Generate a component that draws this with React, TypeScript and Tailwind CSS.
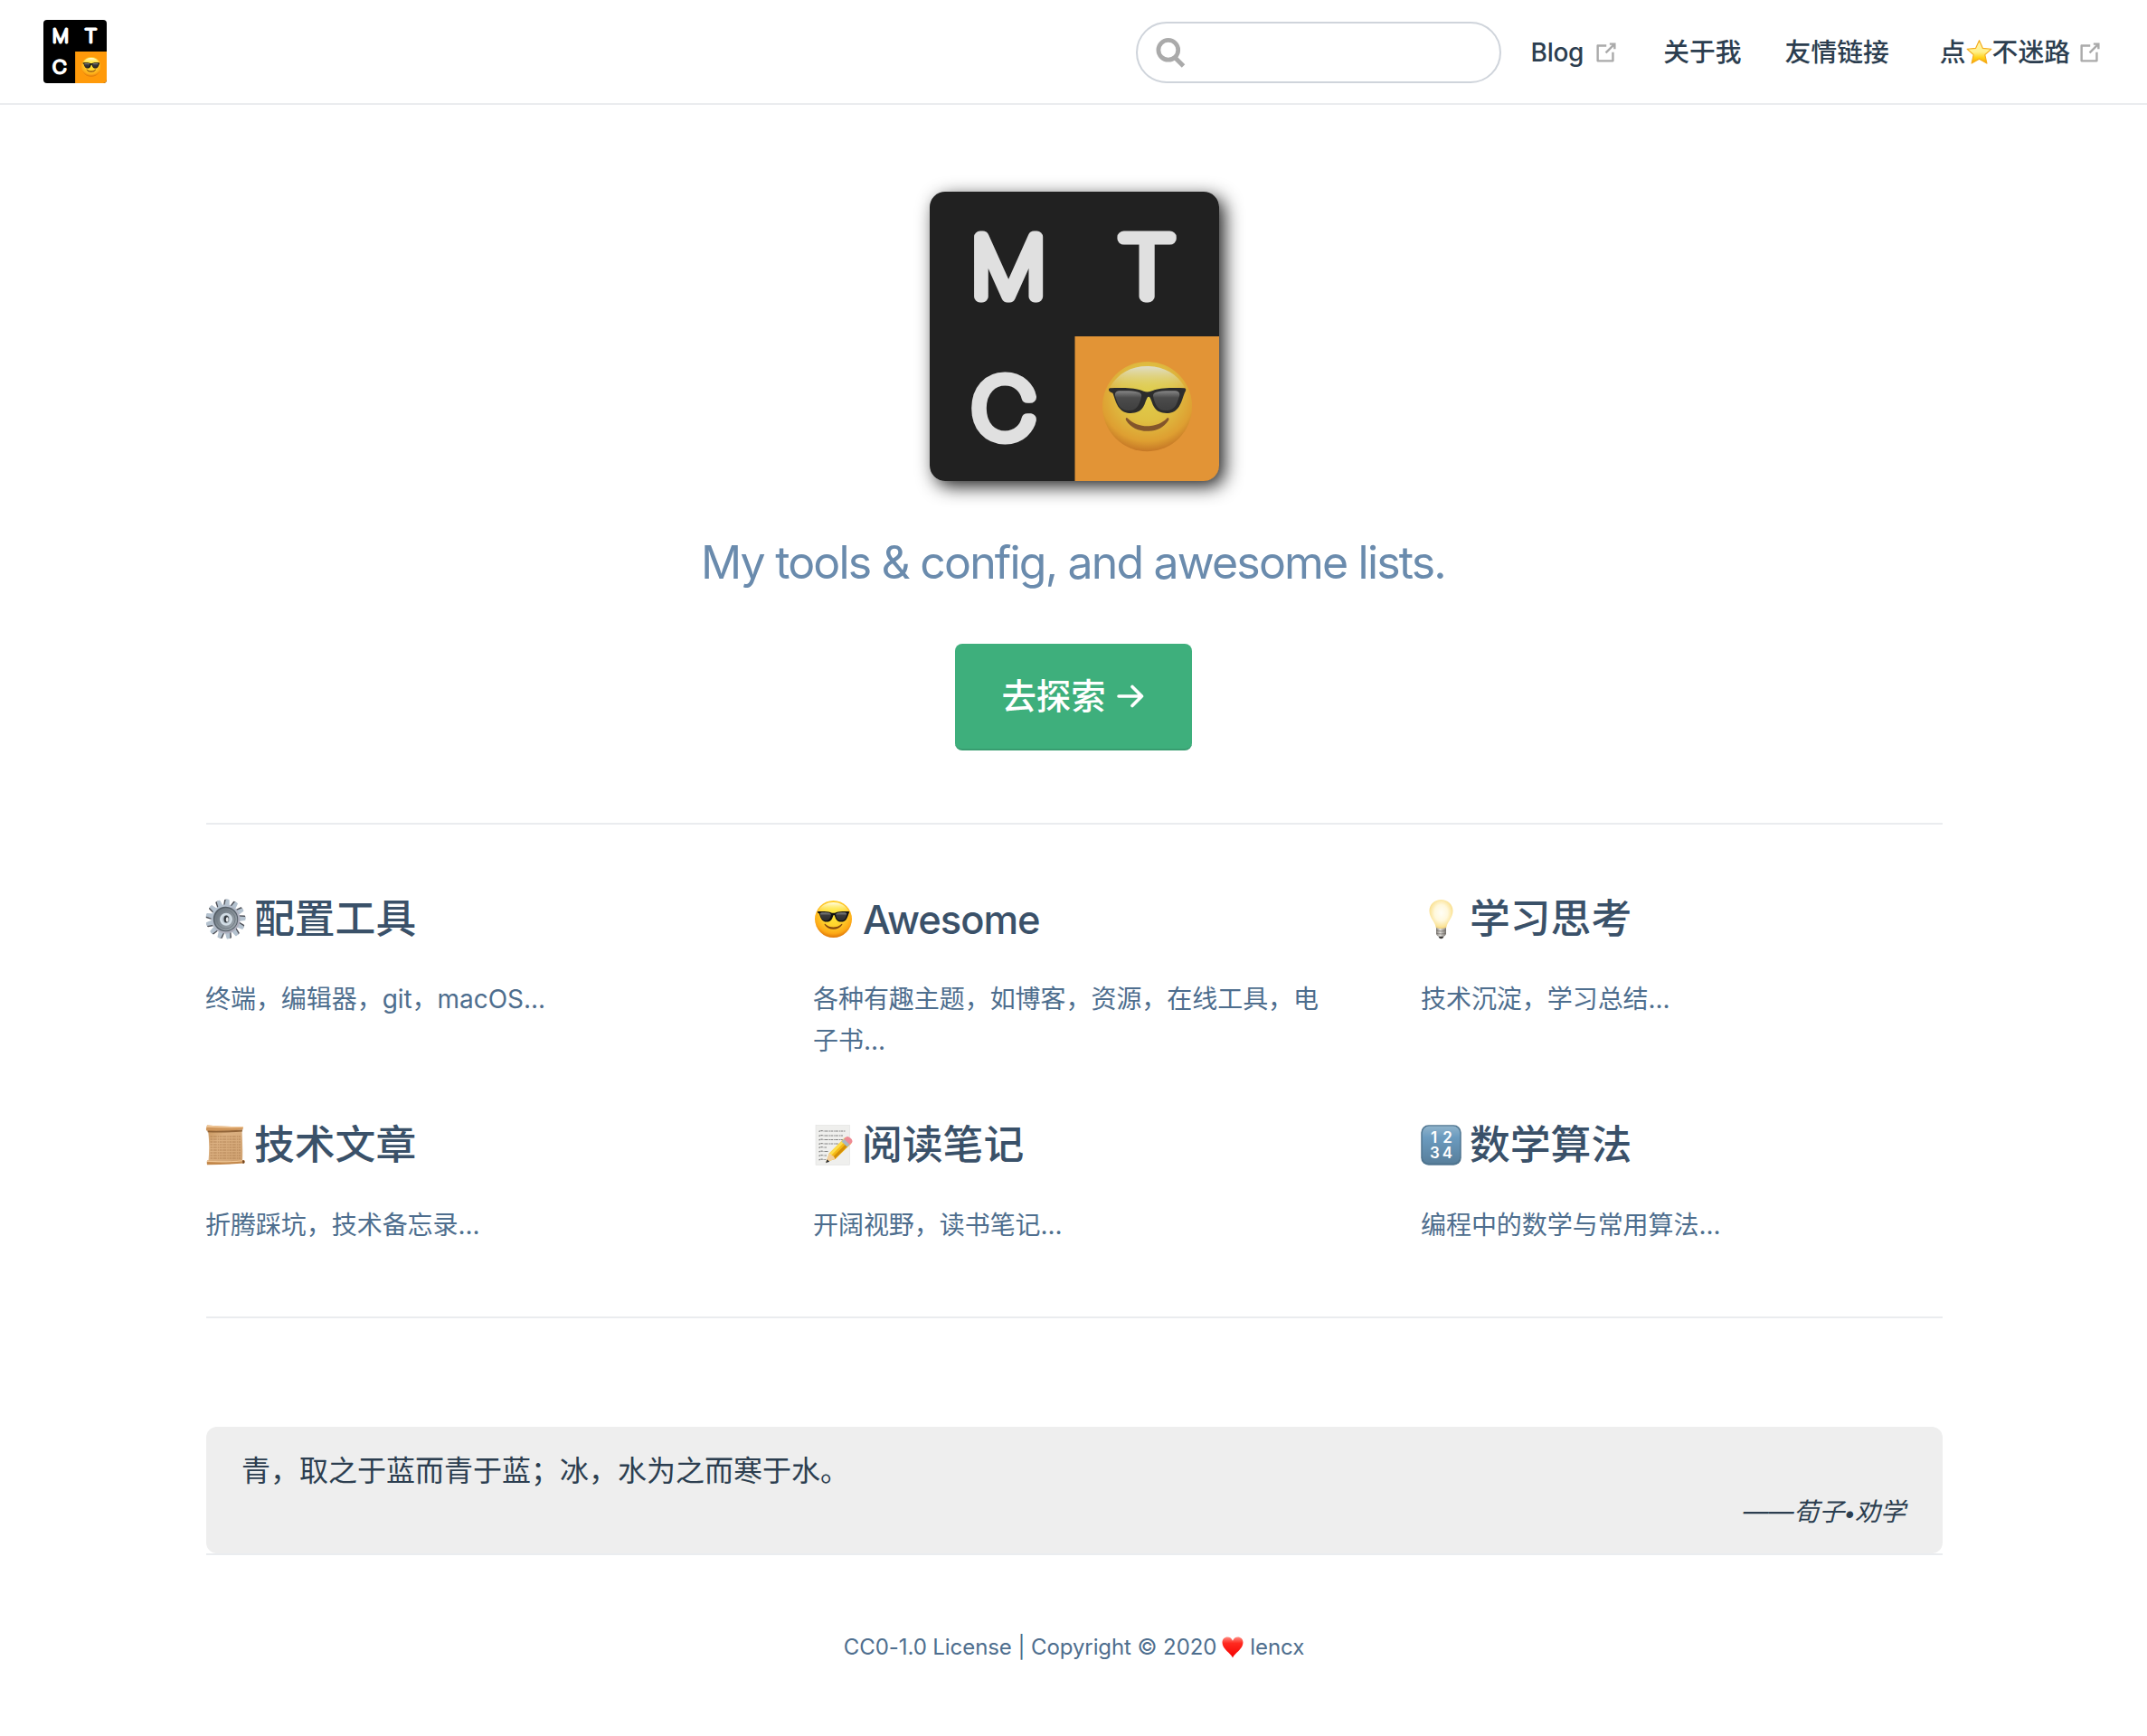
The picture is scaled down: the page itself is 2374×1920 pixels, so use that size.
import type { ReactNode } from "react";

function CoolFace({ className }: { className?: string }) {
  return (
    <svg viewBox="0 0 100 100" className={className}>
      <defs>
        <radialGradient id="face" cx="50%" cy="36%" r="66%">
          <stop offset="0" stopColor="#ffe83b" />
          <stop offset="0.45" stopColor="#ffd52e" />
          <stop offset="0.8" stopColor="#fda917" />
          <stop offset="1" stopColor="#d86c05" />
        </radialGradient>
        <linearGradient id="shine" x1="0" y1="0" x2="0" y2="1">
          <stop offset="0" stopColor="#fffff0" stopOpacity="0.95" />
          <stop offset="1" stopColor="#fff45c" stopOpacity="0.1" />
        </linearGradient>
        <linearGradient id="lens" x1="0" y1="0" x2="0" y2="1">
          <stop offset="0" stopColor="#8a8a8a" />
          <stop offset="0.35" stopColor="#3a3a3a" />
          <stop offset="1" stopColor="#2a2a2a" />
        </linearGradient>
      </defs>
      <circle cx="50" cy="50" r="50" fill="url(#face)" />
      <path d="M8 29C17 13 32 5 50 5s33 8 42 24c-14 0-28 4-42 4S22 29 8 29z" fill="url(#shine)" />
      <path
        d="M7 31c0-1 .8-1.600 2-1.600 12-.5 26-.2 33 2.200 3 1.200 5 2.200 8 2.200s5-1 8-2.200c7-2.400 21-2.700 33-2.200 1.200 0 2 .6 2 1.600 0 1.500-.8 2.500-1.500 4-2 5-3.500 12-7.500 17-3 4-7.500 5.500-12.500 5.500-6 0-11-2-14-7-2-3.500-3-8-4.500-10.500-.8-1.200-2.200-1.200-3 0C48.500 42.500 47.500 47 45.500 50.500c-3 5-8 7-14 7-5 0-9.500-1.500-12.500-5.500-4-5-5.500-12-7.500-17C7.800 33.500 7 32.500 7 31z"
        fill="#101010"
      />
      <path d="M14 36c.4-2 2-3.200 5-3.400 7-.4 16-.3 21 1.400 3 1 4 2.600 3.400 5-1.400 6-4 15-12 15.500-9 .5-13-4-15-10-.8-2.600-2.800-6.500-2.400-8.500z" fill="url(#lens)" />
      <path d="M86 36c-.4-2-2-3.200-5-3.400-7-.4-16-.3-21 1.400-3 1-4 2.600-3.400 5 1.400 6 4 15 12 15.500 9 .5 13-4 15-10 .8-2.600 2.800-6.500 2.400-8.500z" fill="url(#lens)" />
      <path d="M26 63.500c.3-1 1.400-1.200 2.200-.3C34 69 42 71.800 50 71.800s16-2.800 21.800-8.600c.8-.9 1.900-.7 2.200.3.200.8-.2 1.600-.6 2.300C68.500 73.500 60 77.500 50 77.500S31.500 73.500 26.600 65.800c-.4-.7-.8-1.500-.6-2.300z" fill="#84470f" />
    </svg>
  );
}

function Logo({
  className,
  faceClass,
  bg,
  accent,
  ink,
}: {
  className: string;
  faceClass: string;
  bg: string;
  accent: string;
  ink: string;
}) {
  return (
    <div className={"relative overflow-hidden " + className}>
      <svg viewBox="0 0 320 320" className="block size-full">
        <rect width="320" height="320" fill={bg} />
        <rect x="160.500" y="160" width="160" height="160" fill={accent} />
        <g
          fill={ink}
          stroke={ink}
          strokeWidth="13"
          strokeLinejoin="round"
          strokeLinecap="round"
          fontFamily="Inter, sans-serif"
          fontWeight="100"
          fontSize="90"
          textAnchor="middle"
        >
          <text transform="translate(87 115.500) scale(1.04 1)">M</text>
          <text transform="translate(240 115.500) scale(1.14 1)">T</text>
          <text transform="translate(82 271.500) scale(1.1 1)">C</text>
        </g>
      </svg>
      <div className="absolute left-[59.700%] top-[58.900%] size-[31%]">
        <CoolFace className={"block size-full " + faceClass} />
      </div>
    </div>
  );
}

function OutboundIcon({ className }: { className?: string }) {
  return (
    <svg viewBox="0 0 100 100" className={"size-[30px] shrink-0 text-[#aaa] " + className} fill="currentColor">
      <path d="M18.800 85.100h56c2.200 0 4-1.800 4-4v-32h-8v28h-48v-48h28v-8h-32c-2.200 0-4 1.800-4 4v56c0 2.200 1.800 4 4 4z" />
      <polygon points="45.7,48.7 51.3,54.3 77.2,28.5 77.2,37.2 85.2,37.2 85.2,14.9 62.8,14.9 62.8,22.9 71.5,22.9" />
    </svg>
  );
}

function Star() {
  return (
    <svg viewBox="0 0 30 29" className="-mt-[2px] h-[29px] w-[29px] shrink-0">
      <defs>
        <linearGradient id="star" x1="0" y1="0" x2="0" y2="1">
          <stop offset="0" stopColor="#fff6b0" />
          <stop offset="0.5" stopColor="#fff08a" />
          <stop offset="0.75" stopColor="#ffd21a" />
          <stop offset="1" stopColor="#f7a400" />
        </linearGradient>
      </defs>
      <path d="M15 1.200l4 9 9.800.9-7.300 6.600 2.200 9.800L15 22.500l-8.700 5 2.200-9.800L1.200 11.100l9.800-.9z" fill="url(#star)" stroke="#f5ac1c" strokeWidth="1.200" strokeLinejoin="round" />
    </svg>
  );
}

function Gear() {
  const teeth = Array.from({ length: 13 }, (_, i) => (i * 360) / 13);
  return (
    <svg viewBox="0 0 90 90" className="size-[45px]">
      <defs>
        <linearGradient id="gear" x1="0" y1="0" x2="1" y2="1">
          <stop offset="0" stopColor="#b9c9d6" />
          <stop offset="1" stopColor="#a9a6b4" />
        </linearGradient>
        <linearGradient id="dish" x1="0" y1="0" x2="1" y2="1">
          <stop offset="0" stopColor="#66717b" />
          <stop offset="1" stopColor="#a2abb2" />
        </linearGradient>
      </defs>
      {teeth.map((a) => (
        <g key={a} transform={`rotate(${a + 5} 45 45)`}>
          <path d="M39.500 16L40.500 2.500q.5-1.500 2-1.500h4q1.500 0 2 1.500L49.500 16z" fill="#4c4e55" transform="translate(-2 .5)" />
          <path d="M40 16L41.500 2.500q.5-1.500 2-1.500h4q1.500 0 2 1.500L51 16z" fill="#b4c2cf" />
        </g>
      ))}
      <circle cx="45" cy="45" r="32" fill="url(#gear)" />
      <circle cx="45" cy="45" r="27.500" fill="#555f68" />
      <circle cx="45.500" cy="45.500" r="25" fill="url(#dish)" />
      <circle cx="45.500" cy="45.500" r="20.500" fill="none" stroke="#737d85" strokeWidth="2" />
      <circle cx="46" cy="45.500" r="14" fill="#d2dde5" />
      <circle cx="46" cy="45.500" r="9" fill="#b3bfc8" />
      <ellipse cx="46.500" cy="45" rx="5.500" ry="8" fill="#363c42" />
      <ellipse cx="48.500" cy="46" rx="3" ry="5.500" fill="#e4e8eb" />
    </svg>
  );
}

function Bulb() {
  return (
    <svg viewBox="0 0 90 90" className="size-[45px]">
      <defs>
        <radialGradient id="bulb" cx="50%" cy="46%" r="56%">
          <stop offset="0" stopColor="#fffef6" />
          <stop offset="0.5" stopColor="#fff8dc" />
          <stop offset="0.85" stopColor="#fbe49a" />
          <stop offset="1" stopColor="#edcb74" />
        </radialGradient>
        <linearGradient id="cap" x1="0" y1="0" x2="1" y2="0">
          <stop offset="0" stopColor="#7c7872" />
          <stop offset="0.4" stopColor="#e2e0dc" />
          <stop offset="1" stopColor="#77736d" />
        </linearGradient>
      </defs>
      <path d="M45 2C59 2 71 12 71 27c0 9-4 15-7.500 21C60 54 57 58 56.500 64c-4 2.500-19 2.500-23 0C33 58 30 54 26.500 48 23 42 19 36 19 27 19 12 31 2 45 2z" fill="url(#bulb)" />
      <path d="M34 64c5 2.500 17 2.500 22 0v14c-1 3-4 5-6 6H40c-2-1-5-3-6-6z" fill="url(#cap)" />
      <path d="M34 70c6 2.500 16 2.500 22 0M34 76c6 2.500 16 2.500 22 0" fill="none" stroke="#6e6a65" strokeWidth="1.500" />
      <path d="M39 83.500h12l-2 3.500q-4 2.500-8 0z" fill="#3c3a38" />
    </svg>
  );
}

function Scroll() {
  const rows = [26, 32, 38, 44, 50, 56, 62, 68, 74];
  return (
    <svg viewBox="0 0 90 90" className="size-[45px]">
      <defs>
        <linearGradient id="paper" x1="0" y1="0" x2="1" y2="1">
          <stop offset="0" stopColor="#c9975f" />
          <stop offset="0.3" stopColor="#dcb182" />
          <stop offset="1" stopColor="#d0a271" />
        </linearGradient>
      </defs>
      <path d="M6 12c3 22 3 46 1 68h75c1-22 0-46-1-68z" fill="url(#paper)" />
      <g stroke="#a87a4c" strokeWidth="1.500" strokeDasharray="5 1.500 8 2 3 1.500">
        {rows.map((y) => (
          <path key={y} d={`M11 ${y}h67`} />
        ))}
      </g>
      <path d="M4 1q40 4 80 3l-1 7q-38 3-79 2.500-3-.5-2-5.500z" fill="#d0965a" />
      <path d="M4 1q40 3.500 80 3v2.500q-40 1-81-1z" fill="#efc595" />
      <path d="M5 13q38 1 77-2v4q-40 3-77 1.500z" fill="#7f5228" opacity="0.8" />
      <path d="M4 79q40 3.500 78-1h4q2.500 3 0 7-40 3-82 3.500-1-5 0-9.500z" fill="#c3884b" />
      <path d="M4 79q40 3.500 80-1v2.500q-40 4-80 1.500z" fill="#f0c797" />
      <path d="M82 78.500q5-.5 5 3.500t-4 4z" fill="#6f4422" />
    </svg>
  );
}

function Memo() {
  const rows = [14, 24, 33, 42, 50, 59, 68, 77];
  const ends = [72, 66, 66, 56, 30, 34, 30, 28];
  return (
    <svg viewBox="0 0 90 90" className="size-[45px]">
      <rect x="6" y="1" width="75" height="88" fill="#efefed" stroke="#dcdcda" strokeWidth="1" />
      <g fill="none" stroke="#808080" strokeWidth="2.200" strokeDasharray="3 1 5 1.500 2 1 7 2">
        {rows.map((y, i) => (
          <path key={y} d={`M13 ${y + 1}q5-3 10-1L${ends[i]} ${y}`} />
        ))}
      </g>
      <path d="M29 82l7-19L71 28l14 13-36 35z" fill="#f5b915" />
      <path d="M36 63L70 29l4.500 4L40 68z" fill="#fddc4a" />
      <path d="M43 72l35-35 5 4-35 35z" fill="#d48e06" />
      <path d="M29 82l7-19q5 1 5.500 5 5.500.5 7 8z" fill="#f3cf9d" />
      <path d="M28 84.500l3-8 5.500 5z" fill="#2d2d2d" />
      <path d="M63 37l6.500-6.500 12.500 12-6.500 6.500z" fill="#a9b8c2" />
      <path d="M68.500 31.500l4.500-4.500q4-3 10 2.500t3 10L81.500 44z" fill="#ee8a94" />
    </svg>
  );
}

function Numbers() {
  return (
    <svg viewBox="0 0 90 90" className="size-[45px]">
      <defs>
        <linearGradient id="key" x1="0" y1="0" x2="0" y2="1">
          <stop offset="0" stopColor="#8fb3cb" />
          <stop offset="0.3" stopColor="#6b9bbf" />
          <stop offset="1" stopColor="#587f9c" />
        </linearGradient>
      </defs>
      <rect x="0.500" y="0.500" width="89" height="89" rx="17" fill="#4f7590" />
      <rect x="3.500" y="3" width="83" height="82" rx="15" fill="url(#key)" />
      <g fill="#fff" fontFamily="Inter, sans-serif" fontWeight="600" fontSize="34" textAnchor="middle">
        <text x="29" y="40">1</text>
        <text x="59" y="40">2</text>
        <text x="31" y="73">3</text>
        <text x="59" y="73">4</text>
      </g>
    </svg>
  );
}

function Heart() {
  return (
    <svg viewBox="0 0 46 46" className="size-[24px] shrink-0">
      <defs>
        <linearGradient id="heart" x1="0" y1="0" x2="0" y2="1">
          <stop offset="0" stopColor="#ff8a80" />
          <stop offset="0.3" stopColor="#ff2a20" />
          <stop offset="1" stopColor="#f50000" />
        </linearGradient>
      </defs>
      <path d="M23 45C19 35 1 27 1 13 1 5 6 1 12 1c5 0 9 3 11 8 2-5 6-8 11-8 6 0 11 4 11 12 0 14-18 22-22 32z" fill="url(#heart)" />
    </svg>
  );
}

const features: { icon: ReactNode; title: string; details: string }[] = [
  { icon: <Gear />, title: "配置工具", details: "终端，编辑器，git，macOS..." },
  { icon: <CoolFace className="mx-[2px] size-[41px]" />, title: "Awesome", details: "各种有趣主题，如博客，资源，在线工具，电子书..." },
  { icon: <Bulb />, title: "学习思考", details: "技术沉淀，学习总结..." },
  { icon: <Scroll />, title: "技术文章", details: "折腾踩坑，技术备忘录..." },
  { icon: <Memo />, title: "阅读笔记", details: "开阔视野，读书笔记..." },
  { icon: <Numbers />, title: "数学算法", details: "编程中的数学与常用算法..." },
];

export default function App() {
  return (
    <div className="min-h-[1920px] w-full bg-white font-['Inter','Noto_Sans_CJK_SC',sans-serif] text-[#2c3e50] antialiased">
      <header className="flex h-[116px] items-center border-b-2 border-[#eaecef] pl-12 pr-12">
        <Logo className="size-[70px] rounded-[4px]" faceClass="" bg="#000" accent="#ff9a0a" ink="#fff" />
        <div className="ml-auto mt-[2px] flex h-[68px] w-[404px] items-center rounded-full border-2 border-[#cfd4db] pl-[20px]">
          <svg viewBox="0 0 33 33" className="size-[33px]" fill="none" stroke="#aaa">
            <circle cx="13.800" cy="13.300" r="10.900" strokeWidth="4.800" />
            <path d="M21 21.500l9.500 9.500" strokeWidth="5" />
          </svg>
        </div>
        <nav className="mt-[2px] flex items-center text-[28.800px] font-medium leading-[40px]">
          <a className="ml-[33px] flex items-center text-[28px] tracking-[-0.010em]">
            Blog
            <OutboundIcon className="ml-[10px]" />
          </a>
          <a className="ml-[48px]">关于我</a>
          <a className="ml-[48px]">友情链接</a>
          <a className="ml-[56px] flex items-center">
            点<Star />
            不迷路
            <OutboundIcon className="ml-[7px]" />
          </a>
        </nav>
      </header>

      <main className="ml-[228px] w-[1920px]">
        <section className="flex flex-col items-center pt-24">
          <Logo
            className="size-[320px] rounded-[17px] shadow-[6px_6px_20px_#222]"
            faceClass="contrast-75"
            bg="#212121"
            accent="#e29436"
            ink="#e0e0e0"
          />
          <p className="mr-[3px] mt-[56px] text-[50px] leading-[68px] tracking-[-1.820px] text-[#6a8bad]">
            My tools &amp; config, and awesome lists.
          </p>
          <a className="mr-[2px] mt-[56px] flex h-[118px] w-[262px] items-center justify-center rounded-[8px] border-b-2 border-[#389d70] bg-[#3eaf7c] pr-[2px] text-[38.400px] font-medium leading-[60px] text-white">
            去探索
            <svg viewBox="0 0 30 26" className="ml-[12px] h-[26px] w-[30px]" fill="none" stroke="currentColor" strokeWidth="3.600" strokeLinecap="round" strokeLinejoin="round">
              <path d="M2 13h25.500M17 2.500L27.500 13 17 23.500" />
            </svg>
          </a>
        </section>

        <section className="mt-[80px] border-y-2 border-[#eaecef] pb-[44px]">
          <div className="-ml-px grid grid-cols-[576px_576px_576px] gap-x-24">
            {features.map((f) => (
              <article key={f.title} className="h-[250px] pt-[74px]">
                <h2 className="flex h-[60px] items-center gap-[9px] text-[44.800px] font-medium leading-[60px] text-[#3a5169]">
                  {f.icon}
                  <span className={f.title === "Awesome" ? "pl-px pt-px text-[43.500px] tracking-[-1px]" : ""}>{f.title}</span>
                </h2>
                <p className="mt-[36px] text-[28px] leading-[46px] tracking-[-0.050px] text-[#4e6e8e]">{f.details}</p>
              </article>
            ))}
          </div>
        </section>

        <blockquote className="mt-[120px] h-[140px] rounded-[12px] bg-[#eee] pl-[39px] pr-[41px] pt-[21px]">
          <p className="text-[32px] leading-[56px]">青，取之于蓝而青于蓝；冰，水为之而寒于水。</p>
          <p className="text-right text-[28px] italic leading-[35px]">
            ——荀子<span className="-mx-px text-[24px]">•</span>劝学
          </p>
        </blockquote>
      </main>

      <footer className="ml-[228px] flex w-[1920px] items-center justify-center border-t-2 border-[#eaecef] pr-px pt-[80px] text-[24px] leading-[44px] tracking-[-0.080px] text-[#4e6e8e]">
        <span>CC0-1.0 License | Copyright © 2020</span>
        <span className="ml-[6px] mr-[7px]">
          <Heart />
        </span>
        <span>lencx</span>
      </footer>
    </div>
  );
}
